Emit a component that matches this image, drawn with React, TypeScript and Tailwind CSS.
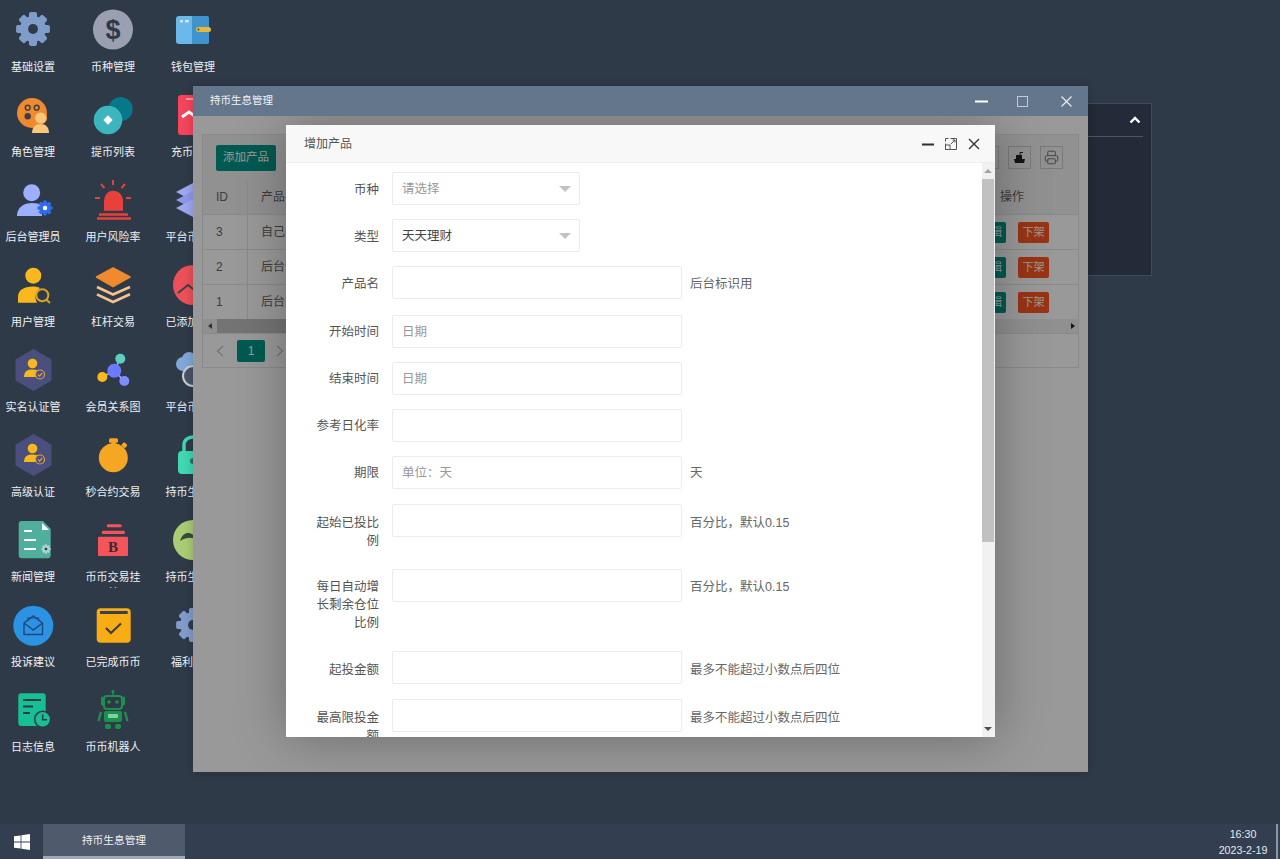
import { Printer } from "lucide-react";
import type { ReactNode } from "react";

const BG = "#2f3a49";

function Svg({ children }: { children: ReactNode }) {
  return (
    <svg width="48" height="48" viewBox="0 0 48 48" className="shrink-0">
      {children}
    </svg>
  );
}

function Gear({ color, hole, cx = 24, cy = 23, r = 13 }: { color: string; hole: string; cx?: number; cy?: number; r?: number }) {
  const teeth = [0, 45, 90, 135, 180, 225, 270, 315];
  const w = r * 0.62;
  return (
    <g>
      {teeth.map((a) => (
        <rect
          key={a}
          x={cx - w / 2}
          y={cy - r * 1.3}
          width={w}
          height={r * 0.7}
          rx={r * 0.14}
          fill={color}
          transform={`rotate(${a} ${cx} ${cy})`}
        />
      ))}
      <circle cx={cx} cy={cy} r={r} fill={color} />
      <circle cx={cx} cy={cy} r={r * 0.38} fill={hole} />
    </g>
  );
}

function VerifyIcon() {
  return (
    <Svg>
      <path d="M24.5 4 L41.5 14 V34 L24.5 44 L7.5 34 V14 Z" fill="#4b4f7e" stroke="#4b4f7e" strokeWidth="2" strokeLinejoin="round" />
      <circle cx="23.5" cy="17.5" r="4.8" fill="#f9b81e" />
      <path d="M15 31 C15 25 19 23.5 23.5 23.5 C27 23.5 30 24.5 32 27 L28 31 Z" fill="#f9b81e" />
      <circle cx="31" cy="28.5" r="4.5" fill="#4b4f7e" stroke="#d9a441" strokeWidth="1.2" />
      <path d="M29 28.5 L30.6 30.2 L33.2 27" fill="none" stroke="#d9a441" strokeWidth="1.2" />
    </Svg>
  );
}

const apps: { name: string; icon: ReactNode }[] = [
  {
    name: "基础设置",
    icon: (
      <Svg>
        <Gear color="#7f9ccb" hole={BG} />
      </Svg>
    ),
  },
  {
    name: "角色管理",
    icon: (
      <Svg>
        <circle cx="23" cy="22" r="15" fill="#f08a2c" />
        <circle cx="18.7" cy="16.7" r="2.4" fill="none" stroke="#3a3f4c" strokeWidth="1.4" />
        <circle cx="27.7" cy="16.7" r="2.4" fill="none" stroke="#3a3f4c" strokeWidth="1.4" />
        <circle cx="18.7" cy="25.3" r="3.2" fill="#3a3f4c" />
        <circle cx="31.7" cy="27" r="6" fill="#f9c77a" stroke="#f08a2c" strokeWidth="1" />
        <path d="M23 42 C23 36 27 33 31.7 33 C36.5 33 40 36 40 42 Z" fill="#f9c77a" />
      </Svg>
    ),
  },
  {
    name: "后台管理员",
    icon: (
      <Svg>
        <circle cx="22.7" cy="16.7" r="8.5" fill="#9db0ff" />
        <path d="M8 40 C8 31 15 27 23 27 C28 27 31 28 33 30 L33 40 Z" fill="#9db0ff" />
        <Gear color="#2e6cf2" hole="#ffffff" cx={36} cy={32} r={5.8} />
      </Svg>
    ),
  },
  {
    name: "用户管理",
    icon: (
      <Svg>
        <circle cx="24.3" cy="14.7" r="8" fill="#f9b81e" />
        <path d="M9 41.7 V36 C9 29 15 25.5 24 25.5 C27 25.5 29 26 31 27 C27 30 25 36 28 41.7 Z" fill="#f9b81e" />
        <circle cx="33.3" cy="34.3" r="6" fill="none" stroke="#d9a520" strokeWidth="2" />
        <path d="M37.5 38.8 L41 42" stroke="#d9a520" strokeWidth="2" />
      </Svg>
    ),
  },
  { name: "实名认证管", icon: <VerifyIcon /> },
  { name: "高级认证", icon: <VerifyIcon /> },
  {
    name: "新闻管理",
    icon: (
      <Svg>
        <path d="M9.7 8 Q9.7 5 12.7 5 H34 L41.7 13 V39 Q41.7 42.3 38.7 42.3 H12.7 Q9.7 42.3 9.7 39 Z" fill="#4fae9c" />
        <path d="M33 7 L40 14 H33 Z" fill="#ffffff" />
        <path d="M15 15 H23 M15 24 H27 M15 33 H27" stroke="#ffffff" strokeWidth="2" />
        <Gear color="#a9d6cc" hole={BG} cx={37} cy={33} r={3.6} />
      </Svg>
    ),
  },
  {
    name: "投诉建议",
    icon: (
      <Svg>
        <circle cx="24.3" cy="24.7" r="20" fill="#2b92e4" />
        <path d="M15 22 L24.3 15 L33.5 22 V33.5 H15 Z M15 22 L24.3 29 L33.5 22" fill="none" stroke="#1f4a78" strokeWidth="1.4" />
        <path d="M19 20 V17 H29.5 V20" fill="none" stroke="#1f4a78" strokeWidth="1.2" />
      </Svg>
    ),
  },
  {
    name: "日志信息",
    icon: (
      <Svg>
        <rect x="9.3" y="7.3" width="27.4" height="32.7" rx="3" fill="#17bf94" />
        <path d="M14 14 H32 M14 20.5 H24 M14 27 H21" stroke="#2b3b46" strokeWidth="2" />
        <circle cx="33.7" cy="33.3" r="8" fill="#17bf94" stroke={BG} strokeWidth="1.6" />
        <path d="M33.7 28.5 V33.7 H38" fill="none" stroke="#2b3b46" strokeWidth="1.6" />
      </Svg>
    ),
  },
  {
    name: "币种管理",
    icon: (
      <svg width="48" height="48" viewBox="0 0 48 48" className="shrink-0">
        <circle cx="24" cy="23.5" r="20" fill="#9aa0b2" />
        <text x="24" y="33" textAnchor="middle" fontSize="27" fontWeight="700" fontFamily="Liberation Sans, sans-serif" fill="#2f3a49">
          $
        </text>
      </svg>
    ),
  },
  {
    name: "提币列表",
    icon: (
      <Svg>
        <circle cx="31.7" cy="18" r="12" fill="#06788a" />
        <circle cx="19" cy="29" r="14.3" fill="#3cb5bd" />
        <path d="M19 24.3 L23.7 29 L19 33.7 L14.3 29 Z" fill="#ffffff" />
      </Svg>
    ),
  },
  {
    name: "用户风险率",
    icon: (
      <Svg>
        <path d="M15 34.7 V26 C15 19 19 14.7 24 14.7 C30 14.7 34 19 34 26 V34.7 Z" fill="#e8403a" />
        <path d="M10 38.5 H39 M8 42.5 H42" stroke="#e8403a" strokeWidth="2.6" />
        <path d="M24 4 V9 M12 8 L15.5 12 M36 8 L32.5 12 M6 22 H11 M42 22 H37" stroke="#e8403a" strokeWidth="2" />
      </Svg>
    ),
  },
  {
    name: "杠杆交易",
    icon: (
      <Svg>
        <path d="M24 7 L41 16 L24 25.5 L7.5 16 Z" fill="#f08a2c" stroke="#f08a2c" strokeLinejoin="round" strokeWidth="1.5" />
        <path d="M8 26 L24 33.5 L41 26" fill="none" stroke="#f5c28d" strokeWidth="2.6" />
        <path d="M8 33.3 L24 41 L41 33.3" fill="none" stroke="#f5c28d" strokeWidth="2.6" />
      </Svg>
    ),
  },
  {
    name: "会员关系图",
    icon: (
      <Svg>
        <path d="M25.3 24.7 L31.3 12.7 M25.3 24.7 L13.3 31 M25.3 24.7 L35.3 35" stroke="#a9b4ff" strokeWidth="1.6" />
        <circle cx="31.3" cy="12.7" r="5" fill="#5ccfc0" />
        <circle cx="25.3" cy="24.7" r="7" fill="#6b7bff" />
        <circle cx="13.3" cy="31" r="5" fill="#f9b81e" />
        <circle cx="35.3" cy="35" r="5" fill="#7f8cff" />
      </Svg>
    ),
  },
  {
    name: "秒合约交易",
    icon: (
      <Svg>
        <rect x="20" y="7.3" width="9" height="4.4" rx="1.5" fill="#f5a623" />
        <rect x="22.5" y="10" width="4" height="5" fill="#f5a623" />
        <rect x="33" y="12" width="5" height="4.5" rx="1.5" fill="#f5a623" transform="rotate(40 35.5 14)" />
        <circle cx="24.3" cy="26.7" r="14.5" fill="#f5a623" />
      </Svg>
    ),
  },
  {
    name: "币币交易挂单",
    icon: (
      <Svg>
        <rect x="17.7" y="8.3" width="15" height="3" rx="1.5" fill="#f5555a" />
        <rect x="12.7" y="14.7" width="23.3" height="3.3" rx="1.5" fill="#f5555a" />
        <rect x="9" y="20.7" width="30" height="19.3" rx="1" fill="#f5555a" />
        <text x="24" y="36" textAnchor="middle" fontSize="15" fontWeight="700" fontFamily="Liberation Serif, serif" fill="#3a2a34">
          B
        </text>
      </Svg>
    ),
  },
  {
    name: "已完成币币",
    icon: (
      <Svg>
        <rect x="7.7" y="7.3" width="34" height="34.4" rx="4" fill="#f9ad14" />
        <path d="M11 11.5 H38.7" stroke="#3a3f4c" strokeWidth="3" />
        <path d="M17 27 L22 32 L32 22.5" fill="none" stroke="#3a3f4c" strokeWidth="2.2" />
      </Svg>
    ),
  },
  {
    name: "币币机器人",
    icon: (
      <Svg>
        <path d="M24 6 V10" stroke="#1f8f4f" strokeWidth="1.6" />
        <circle cx="24" cy="5.5" r="1.6" fill="#1f8f4f" />
        <rect x="15" y="10" width="18" height="13" rx="3" fill="none" stroke="#1f8f4f" strokeWidth="2" />
        <circle cx="20" cy="16" r="1.8" fill="#1f8f4f" />
        <circle cx="28" cy="16" r="1.8" fill="#1f8f4f" />
        <rect x="12" y="10.5" width="3" height="9" rx="1.5" fill="#1f8f4f" />
        <rect x="33" y="10.5" width="3" height="9" rx="1.5" fill="#1f8f4f" />
        <rect x="15" y="25" width="18" height="11" rx="2" fill="#1f8f4f" />
        <rect x="19" y="28" width="10" height="4" rx="1" fill="#7fd3a0" />
        <path d="M12 26 L9.5 35 M36 26 L38.5 35" stroke="#1f8f4f" strokeWidth="2.4" />
        <rect x="16" y="38" width="6" height="5" rx="2" fill="#1f8f4f" />
        <rect x="26" y="38" width="6" height="5" rx="2" fill="#1f8f4f" />
      </Svg>
    ),
  },
  {
    name: "钱包管理",
    icon: (
      <Svg>
        <rect x="7" y="10" width="33" height="28" rx="3" fill="#6bb8ea" />
        <path d="M23 10 H37 Q40 10 40 13 V35 Q40 38 37 38 H23 Z" fill="#3f94cd" />
        <rect x="11" y="14" width="3" height="2.4" fill="#cfe8f8" />
        <rect x="16" y="14" width="4" height="2.4" fill="#cfe8f8" />
        <rect x="27" y="21" width="15" height="5" rx="2.5" fill="#e8b83a" />
        <circle cx="29.5" cy="23.5" r="1" fill="#3a3f4c" />
      </Svg>
    ),
  },
  {
    name: "充币管理",
    icon: (
      <Svg>
        <rect x="9" y="4" width="28" height="40" rx="3" fill="#f5455c" />
        <path d="M17 8 H24" stroke="#ffb0b8" strokeWidth="1.5" />
        <path d="M13 26 L20 21 L27 26" fill="none" stroke="#ffffff" strokeWidth="3" />
      </Svg>
    ),
  },
  {
    name: "平台币管理",
    icon: (
      <Svg>
        <path d="M7 16 L24 7 L41 16 L24 25 Z" fill="#9da8ef" />
        <path d="M7 24 L24 15 L41 24 L24 33 Z" fill="#8c98ea" />
        <path d="M7 32 L24 23 L41 32 L24 41 Z" fill="#9da8ef" />
      </Svg>
    ),
  },
  {
    name: "已添加币种",
    icon: (
      <Svg>
        <circle cx="24" cy="24" r="20" fill="#ec5058" />
        <path d="M9 32 L19 24 L29 32" fill="none" stroke="#3a3f4c" strokeWidth="2" />
      </Svg>
    ),
  },
  {
    name: "平台币配置",
    icon: (
      <Svg>
        <circle cx="14" cy="18" r="7" fill="#7fa8d8" />
        <circle cx="20" cy="13" r="7" fill="#7fa8d8" />
        <circle cx="24" cy="30" r="10" fill="#4b5368" stroke="#c8ccd4" strokeWidth="2" />
      </Svg>
    ),
  },
  {
    name: "持币生息宝",
    icon: (
      <Svg>
        <path d="M15 22 V14 C15 9 19 6 24 6 C29 6 33 9 33 14 V22" fill="none" stroke="#3fd8b0" strokeWidth="3.4" />
        <rect x="9" y="20" width="30" height="23" rx="4" fill="#3fd8b0" />
        <circle cx="24" cy="30" r="3" fill="#2f6f66" />
      </Svg>
    ),
  },
  {
    name: "持币生息单",
    icon: (
      <Svg>
        <circle cx="24" cy="24" r="20" fill="#a9cc74" />
        <path d="M11 25 C13 19 16 17 19 17 C23 17 25 19 28 24 C23 21 18 21 11 25 Z" fill="#3a4a3c" />
      </Svg>
    ),
  },
  {
    name: "福利设置",
    icon: (
      <Svg>
        <Gear color="#7f9ccb" hole={BG} cy={24} />
      </Svg>
    ),
  },
];

const fields = [
  { label: "币种", kind: "select", placeholder: "请选择", mb: "mb-[14px]", lp: "pt-[9px]" },
  { label: "类型", kind: "select", value: "天天理财", mb: "mb-[14px]", lp: "pt-[9px]" },
  { label: "产品名", aux: "后台标识用", mb: "mb-[16px]", lp: "pt-[9px]" },
  { label: "开始时间", placeholder: "日期", mb: "mb-[14px]", lp: "pt-[8px]" },
  { label: "结束时间", placeholder: "日期", mb: "mb-[14px]", lp: "pt-[8px]" },
  { label: "参考日化率", mb: "mb-[14px]", lp: "pt-[8px]" },
  { label: "期限", placeholder: "单位：天", aux: "天", mb: "mb-[15px]", lp: "pt-[8px]" },
  { label: "起始已投比例", aux: "百分比，默认0.15", mb: "mb-[13px]", lp: "pt-[10px]" },
  { label: "每日自动增长剩余仓位比例", aux: "百分比，默认0.15", mb: "mb-[13px]", lp: "pt-[9px]" },
  { label: "起投金额", aux: "最多不能超过小数点后四位", mb: "mb-[14px]", lp: "pt-[10px]" },
  { label: "最高限投金额", aux: "最多不能超过小数点后四位", mb: "mb-[14px]", lp: "pt-[10px]" },
];

const rows = [
  { id: "3", name: "自己的产品" },
  { id: "2", name: "后台的产品" },
  { id: "1", name: "后台的产品" },
];

function Field({ f }: { f: (typeof fields)[number] }) {
  return (
    <div className={`flex items-start pl-[27px] ${f.mb}`}>
      <label className={`w-[66px] shrink-0 pb-[6px] text-right text-[12.5px] leading-[18px] text-[#555] ${f.lp}`}>{f.label}</label>
      {f.kind === "select" ? (
        <div className="ml-[13px] flex h-[33px] w-[188px] items-center justify-between rounded-[2px] border border-[#ececec] pl-[9px] pr-[8px]">
          <span className={`pt-[2px] text-[12.5px] ${f.value ? "text-[#444]" : "text-[#999]"}`}>{f.value ?? f.placeholder}</span>
          <span className="h-0 w-0 border-x-[6px] border-t-[6px] border-x-transparent border-t-[#c2c2c2]" />
        </div>
      ) : (
        <input
          readOnly
          placeholder={f.placeholder}
          className="ml-[13px] h-[33px] w-[290px] rounded-[2px] border border-[#ececec] px-[9px] text-[12.5px] outline-none placeholder:text-[#999]"
        />
      )}
      {f.aux && <span className={`ml-[8px] text-[12.5px] leading-[18px] text-[#666] ${f.lp}`}>{f.aux}</span>}
    </div>
  );
}

function AddProductModal() {
  return (
    <div className="absolute left-[93px] top-[9px] flex h-[612px] w-[709px] flex-col bg-white shadow-[1px_1px_50px_rgba(0,0,0,0.3)]">
      <div className="flex h-[38px] shrink-0 items-center justify-between border-b border-[#eee] bg-[#f8f8f8] pl-[18px] pr-[15px]">
        <span className="text-[12px] text-[#555]">增加产品</span>
        <div className="flex items-center gap-[11px]">
          <svg width="12" height="12" viewBox="0 0 12 12">
            <path d="M0 6.5 H12" stroke="#2f2f2f" strokeWidth="2" />
          </svg>
          <svg width="12" height="12" viewBox="0 0 12 12" fill="none" stroke="#555" strokeWidth="1">
            <path d="M5.5 .5 H11.5 V11.5 H.5 V5.5" />
            <rect x=".5" y="7" width="4.5" height="4.5" />
            <path d="M6 6 L10 2 M7.5 2 H10 V4.5" />
            <path d="M.5 3.5 V.5 H3.5" />
          </svg>
          <svg width="12" height="12" viewBox="0 0 12 12" stroke="#333" strokeWidth="1.4">
            <path d="M1 1 L11 11 M11 1 L1 11" />
          </svg>
        </div>
      </div>
      <div className="flex min-h-0 flex-1">
        <div className="min-w-0 flex-1 overflow-hidden pt-[9px]">
          {fields.map((f) => (
            <Field key={f.label} f={f} />
          ))}
        </div>
        <div className="flex w-[13px] shrink-0 flex-col items-start bg-[#f1f1f1]">
          <div className="flex h-[16px] w-[12px] shrink-0 items-center justify-center">
            <span className="h-0 w-0 border-x-[4px] border-b-[4px] border-x-transparent border-b-[#a3a3a3]" />
          </div>
          <div className="h-[363px] w-[12px] shrink-0 bg-[#c1c1c1]" />
          <div className="flex-1" />
          <div className="flex h-[16px] w-[12px] shrink-0 items-center justify-center">
            <span className="h-0 w-0 border-x-[4px] border-t-[4px] border-x-transparent border-t-[#505050]" />
          </div>
        </div>
      </div>
    </div>
  );
}

function ProductTable() {
  return (
    <div className="mx-[9px] mt-[18px] flex h-[234px] flex-col border border-[#e6e6e6] bg-white">
      <div className="flex h-[45px] shrink-0 items-center justify-between bg-[#f2f2f2] pl-[13px] pr-[15px]">
        <button className="h-[26px] w-[60px] rounded-[2px] bg-[#009688] text-[11.5px] text-white">添加产品</button>
        <div className="flex gap-[9px]">
          <div className="h-[23px] w-[23px] border border-[#ccc]" />
          <div className="flex h-[23px] w-[23px] items-center justify-center border border-[#ccc]">
            <svg width="13" height="13" viewBox="0 0 13 13">
              <path d="M1 8 H12 L11 12 H2 Z" fill="#222" />
              <rect x="3" y="4" width="6" height="4" fill="#222" />
              <path d="M7 4 V1.5 H10" stroke="#222" fill="none" />
            </svg>
          </div>
          <div className="flex h-[23px] w-[23px] items-center justify-center border border-[#ccc]">
            <Printer size={15} strokeWidth={1.6} color="#777" />
          </div>
        </div>
      </div>
      <div className="flex h-[34px] shrink-0 items-center bg-[#f2f2f2] text-[12px] text-[#666]">
        <span className="flex h-full w-[45px] items-center border-r border-[#e6e6e6] pl-[13px]">ID</span>
        <span className="flex-1 pl-[13px]">产品名</span>
        <span className="w-[90px] border-l border-[#e6e6e6] pl-[11px]">操作</span>
      </div>
      {rows.map((r) => (
        <div key={r.id} className="flex h-[35px] shrink-0 items-center border-t border-[#e6e6e6] text-[12px] text-[#666]">
          <span className="flex h-full w-[45px] items-center border-r border-[#e6e6e6] pl-[13px]">{r.id}</span>
          <span className="flex-1 pl-[13px]">{r.name}</span>
          <div className="flex w-[102px] gap-[12px]">
            <span className="flex h-[21px] w-[30px] items-center justify-center rounded-[2px] bg-[#009688] text-[11px] text-white">编辑</span>
            <span className="flex h-[21px] w-[31px] items-center justify-center rounded-[2px] bg-[#ff5722] text-[11px] text-white">下架</span>
          </div>
        </div>
      ))}
      <div className="flex h-[14px] shrink-0 items-center justify-between bg-[#f1f1f1]">
        <div className="flex h-full flex-1 items-center">
          <span className="ml-[5px] h-0 w-0 border-y-[3.5px] border-r-[4px] border-y-transparent border-r-[#505050]" />
          <div className="ml-[5px] h-full w-[400px] bg-[#c1c1c1]" />
        </div>
        <span className="mr-[3px] h-0 w-0 border-y-[3.5px] border-l-[4px] border-y-transparent border-l-[#222]" />
      </div>
      <div className="flex min-h-0 flex-1 items-center border-t border-[#e6e6e6] pl-[13px]">
        <span className="flex h-[22px] w-[21px] items-center justify-start">
          <svg width="8" height="12" viewBox="0 0 8 12" fill="none" stroke="#c2c2c2" strokeWidth="1.2">
            <path d="M7 1 L1.5 6 L7 11" />
          </svg>
        </span>
        <span className="flex h-[22px] w-[28px] items-center justify-center rounded-[2px] bg-[#009688] text-[12px] text-white">1</span>
        <svg width="8" height="12" viewBox="0 0 8 12" fill="none" stroke="#c2c2c2" strokeWidth="1.2" className="ml-[11px]">
          <path d="M1 1 L6.5 6 L1 11" />
        </svg>
      </div>
    </div>
  );
}

function CoinWindow() {
  return (
    <div className="absolute left-[193px] top-[86px] flex h-[686px] w-[895px] flex-col shadow-[0_0_10px_rgba(0,0,0,0.2)]">
      <div className="flex h-[30px] shrink-0 items-center bg-[#64768c] pl-[17px] pr-[16px]">
        <span className="flex-1 text-[10.5px] text-[#f2f4f6]">持币生息管理</span>
        <svg width="13" height="3" viewBox="0 0 13 3">
          <path d="M0 1.5 H13" stroke="#fff" strokeWidth="2" />
        </svg>
        <svg width="11" height="11" viewBox="0 0 11 11" fill="none" stroke="#c4cbd4" strokeWidth="1" className="ml-[29px]">
          <rect x=".5" y=".5" width="10" height="10" />
        </svg>
        <svg width="11" height="11" viewBox="0 0 11 11" stroke="#e8ebef" strokeWidth="1.2" className="ml-[33px]">
          <path d="M.5 .5 L10.5 10.5 M10.5 .5 L.5 10.5" />
        </svg>
      </div>
      <div className="relative min-h-0 flex-1 overflow-hidden bg-white">
        <ProductTable />
        <div className="absolute inset-0 bg-black/40" />
        <AddProductModal />
      </div>
    </div>
  );
}

export default function App() {
  return (
    <div className="relative flex h-[859px] w-[1280px] flex-col overflow-hidden bg-[#2f3a49] font-['Liberation_Sans','Noto_Sans_CJK_SC',sans-serif]">
      <div className="relative min-h-0 flex-1">
        <div className="grid grid-flow-col grid-rows-[repeat(9,85px)] auto-cols-[66px] gap-x-[14px]">
          {apps.map((a) => (
            <div key={a.name} className="flex h-[85px] flex-col items-center pt-[6px]">
              {a.icon}
              <span className="mt-[5px] h-[19px] w-[60px] shrink-0 overflow-hidden text-center text-[11px] leading-[16px] text-[#eef0f3]">
                {a.name}
              </span>
            </div>
          ))}
        </div>
        <div className="absolute left-[900px] top-[103px] flex h-[173px] w-[252px] flex-col border border-[#3f4a5a] bg-[#232b38] px-[8px]">
          <div className="flex h-[33px] items-center justify-end border-b border-[#4d5665] pr-[2px]">
            <svg width="12" height="8" viewBox="0 0 12 8" fill="none" stroke="#fff" strokeWidth="2.4">
              <path d="M1.5 6.5 L6 2 L10.5 6.5" />
            </svg>
          </div>
        </div>
        <CoinWindow />
      </div>
      <div className="flex h-[35px] shrink-0 items-stretch bg-[#333f50]">
        <div className="flex w-[43px] items-center justify-center">
          <svg width="16" height="16" viewBox="0 0 16 16" fill="#fff">
            <path d="M0 2.3 L6.6 1.4 V7.6 H0 Z M7.4 1.3 L16 0 V7.6 H7.4 Z M0 8.4 H6.6 V14.6 L0 13.7 Z M7.4 8.4 H16 V16 L7.4 14.7 Z" />
          </svg>
        </div>
        <div className="flex w-[142px] items-center justify-center border-b-[3px] border-[#a0a8b4] bg-[#4f5b6c] text-[10.7px] text-[#eef0f3]">持币生息管理</div>
        <div className="flex-1" />
        <div className="flex w-[60px] flex-col items-center justify-center text-[10.7px] leading-[16px] text-[#e6e9ee]">
          <span>16:30</span>
          <span>2023-2-19</span>
        </div>
        <div className="ml-[3px] w-[2px] bg-[#8d95a1]" />
        <div className="w-[2px]" />
      </div>
    </div>
  );
}
